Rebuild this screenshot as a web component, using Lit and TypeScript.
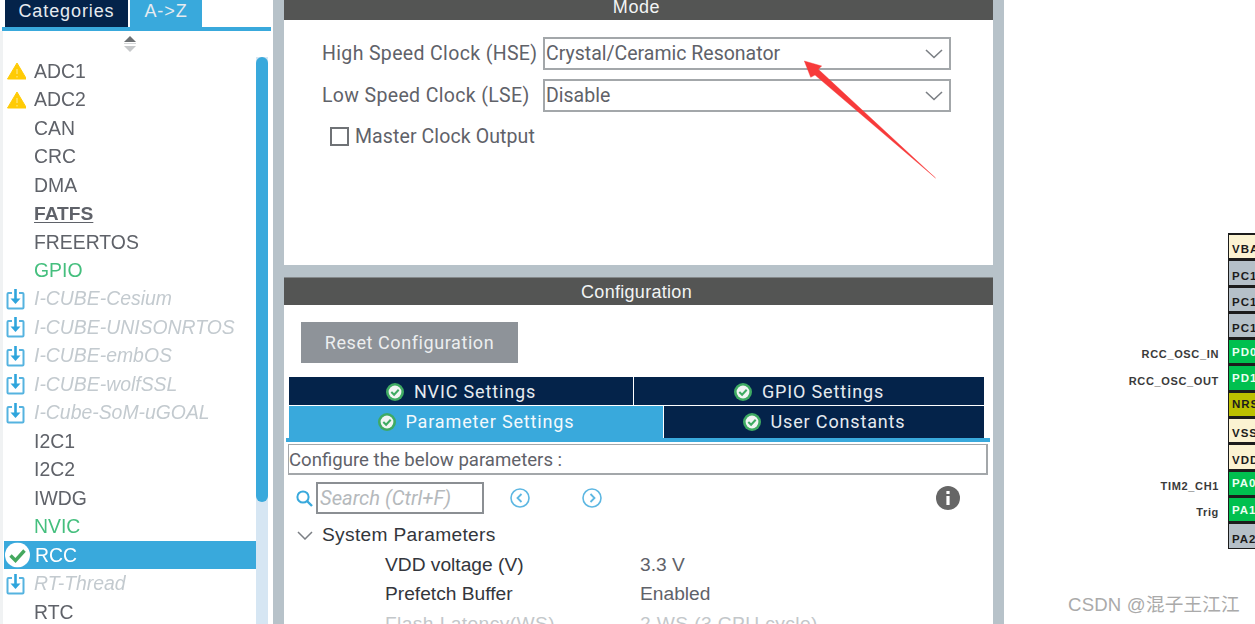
import { LitElement, html, css, svg } from "lit";
import { customElement } from "lit/decorators.js";

type Item = { t: string; k?: string; i?: string };
const items: Item[] = [
  { t: "ADC1", i: "warn" }, { t: "ADC2", i: "warn" }, { t: "CAN" }, { t: "CRC" }, { t: "DMA" },
  { t: "FATFS", k: "bold" }, { t: "FREERTOS" }, { t: "GPIO", k: "green" },
  { t: "I-CUBE-Cesium", k: "pack", i: "dl" }, { t: "I-CUBE-UNISONRTOS", k: "pack", i: "dl" },
  { t: "I-CUBE-embOS", k: "pack", i: "dl" }, { t: "I-CUBE-wolfSSL", k: "pack", i: "dl" },
  { t: "I-Cube-SoM-uGOAL", k: "pack", i: "dl" }, { t: "I2C1" }, { t: "I2C2" }, { t: "IWDG" },
  { t: "NVIC", k: "green" }, { t: "RCC", k: "sel", i: "ok" }, { t: "RT-Thread", k: "pack", i: "dl" }, { t: "RTC" },
];
const pins = [
  ["", "VBAT", "beige"], ["", "PC13-", "grey"], ["", "PC14-", "grey"], ["", "PC15-", "grey"],
  ["RCC_OSC_IN", "PD0-OSC", "green"], ["RCC_OSC_OUT", "PD1-OSC", "green"], ["", "NRST", "olive"],
  ["", "VSSA", "beige"], ["", "VDDA", "beige"], ["TIM2_CH1", "PA0-WKUP", "green"], ["Trig", "PA1", "green"], ["", "PA2", "grey"],
];

const warn = svg`<svg class="ic" width="20" height="18" viewBox="-1 0 20 18"><path d="M10 1 L19.5 17 H0.5 Z" fill="#ffcb05" stroke="#ffcb05" stroke-linejoin="round"/><path d="M10 7v5M10 14v1.5" stroke="#ffe680" stroke-width="1.2"/></svg>`;
const dl = svg`<svg class="ic" width="20" height="22" viewBox="0 0 20 22"><path d="M6 5H2.5a1 1 0 0 0-1 1v13.5a1 1 0 0 0 1 1h14a1 1 0 0 0 1-1V6a1 1 0 0 0-1-1H13" fill="none" stroke="#55b3e0" stroke-width="2"/><path d="M9.5 1v11" stroke="#2fa5dc" stroke-width="2.6"/><path d="M4.5 10.5h10l-5 5.5z" fill="#2fa5dc"/></svg>`;
const ok = svg`<svg class="ic" width="25" height="25" viewBox="0 0 25 25"><circle cx="12.5" cy="12.5" r="12.5" fill="#fff"/><path d="M5.5 13l5 5 9-10" fill="none" stroke="#45a85f" stroke-width="3.4"/></svg>`;
const tabOk = svg`<svg class="tok" width="18" height="18" viewBox="0 0 18 18"><circle cx="9" cy="9" r="9" fill="#3faa63"/><circle cx="9" cy="9" r="6.4" fill="#f2f5f4"/><path d="M5.3 9l2.8 2.8 4.6-5" fill="none" stroke="#3faa63" stroke-width="2"/></svg>`;
const chevron = svg`<svg width="18" height="10" viewBox="0 0 18 10"><path d="M1 1l8 7.5L17 1" fill="none" stroke="#7b7f84" stroke-width="1.6"/></svg>`;

@customElement("app-root")
export class AppRoot extends LitElement {
  static styles = css`
    :host { display: block; width: 1255px; height: 624px; overflow: hidden; background: #fff;
      font-family: Roboto, "Liberation Sans", Arial, sans-serif; color: #5f6269; }
    .app { display: grid; grid-template-columns: 273px 11px 709px 11px 251px; height: 624px; position: relative; filter: blur(0.35px); }
    .gut { background: #b7c2c9; }
    /* left */
    .left { display: flex; flex-direction: column; background: #fff; overflow: hidden; font-family: "Liberation Sans", Arial, sans-serif; }
    .tabs { display: flex; height: 27px; padding-left: 5px; gap: 2px; flex: none; }
    .tab { font-size: 18px; letter-spacing: .9px; line-height: 23px; color: #e6ebf0; background: #04234a; width: 123px; text-align: center; }
    .tab.on { background: #39a9dc; width: 72px; }
    .rule { height: 4px; background: #39a9dc; margin-left: 2px; margin-right: 2px; flex: none; }
    .lbody { flex: 1; display: grid; grid-template-columns: 252px 12px 1fr; margin-left: 3px; box-shadow: -3px 0 0 #f0f2f3; min-height: 0; padding-left: 1px; }
    .lmain { display: flex; flex-direction: column; min-width: 0; }
    .sort { height: 26px; display: flex; flex-direction: column; align-items: center; padding-top: 5px; box-sizing: border-box; flex: none; }
    .row { height: 28.47px; flex: none; box-sizing: border-box; padding-top: 0; display: flex; align-items: center; font-size: 19.4px; padding-left: 30px; position: relative; white-space: nowrap; }
    .row .ic { position: absolute; left: 2px; top: 50%; transform: translateY(-50%); }
    .row.bold { font-weight: 700; text-decoration: underline; text-underline-offset: 2px; font-size: 19.2px; }
    .row.green { color: #45bf7e; }
    .row.pack { color: #c3cacf; font-style: italic; }
    .row.sel { background: #39a9dc; color: #fff; padding-left: 31px; }
    .row.sel .ic { left: 1px; }
    .track { margin-top: 26px; background: #d6e6f3; }
    .thumb { height: 445px; background: #39a9dc; border-radius: 6px; }
    /* centre */
    .center { display: flex; flex-direction: column; min-width: 0; }
    .head { background: #545554; color: #f2f4f4; font-family: "Liberation Sans", Arial, sans-serif; font-size: 18px; text-align: center; flex: none; padding-right: 4px; }
    .mode { height: 265px; flex: none; background: #fff; display: flex; flex-direction: column; overflow: hidden; }
    .mode .head { height: 20px; line-height: 15px; letter-spacing: .6px; }
    .modebody { padding: 17px 42px 0 38px; display: flex; flex-direction: column; }
    .frow { display: flex; align-items: center; height: 33px; margin-bottom: 9px; justify-content: space-between; font-size: 19.5px; letter-spacing: .35px; white-space: nowrap; }
    .select { width: 408px; height: 33px; box-sizing: border-box; border: 2px solid #a3a7aa; display: flex; align-items: center; justify-content: space-between; padding: 0 6px 0 1px; letter-spacing: 0; margin-left: 1px; }
    .chk { display: flex; align-items: center; gap: 6px; margin: 4px 0 0 8px; font-size: 19.5px; letter-spacing: .1px; }
    .box { width: 15px; height: 15px; border: 2px solid #6f7276; box-sizing: content-box; }
    .gap { height: 12px; flex: none; background: #b7c2c9; }
    .conf { flex: 1; background: #fff; display: flex; flex-direction: column; overflow: hidden; min-height: 0; }
    .conf .head { height: 28px; line-height: 28px; letter-spacing: .3px; border-top: 1px solid #84888a; box-sizing: border-box; }
    .reset { margin: 17px 0 14px 17px; width: 217px; height: 41px; background: #8e9399; color: #eceeef; font-size: 18px; letter-spacing: .58px; display: flex; align-items: center; justify-content: center; flex: none; }
    .tg { margin: 0 9px 0 5px; display: flex; flex-direction: column; gap: 1px; flex: none; }
    .tr { display: flex; gap: 1px; }
    .st { background: #04234a; color: #e6ebf0; font-size: 18px; letter-spacing: .85px; display: flex; align-items: center; justify-content: center; gap: 10px; padding-top: 1px; box-sizing: border-box; }
    .tr1 .st { height: 28px; }
    .tr2 .st { height: 32px; padding-bottom: 2px; }
    .st.on { background: #39a9dc; color: #f4f9fc; }
    .bluerule { height: 4px; background: #39a9dc; margin: 0 3px 0 2px; flex: none; }
    .cfg { margin: 2px 5px 0 4px; height: 31px; flex: none; box-sizing: border-box; border: 2px solid #a3a7aa; border-width: 1px 2px 2px 1px; font-size: 18.6px; line-height: 31px; color: #5f6269; white-space: nowrap; }
    .sr { display: flex; align-items: center; height: 32px; margin: 7px 0 0 12px; flex: none; }
    .search { width: 168px; height: 32px; box-sizing: border-box; border: 2px solid #8b8f93; margin-left: 3px; font-style: italic; color: #b5b9bc; font-size: 20.2px; line-height: 29px; padding-left: 2px; white-space: nowrap; overflow: hidden; }
    .c1 { margin-left: 26px; }
    .c2 { margin-left: 52px; }
    .info { margin-left: 334px; }
    .sys { display: flex; align-items: center; height: 30px; margin: 6px 0 0 13px; font-family: "Liberation Sans", Arial, sans-serif; font-size: 19.2px; letter-spacing: .3px; color: #33363c; gap: 9px; flex: none; }
    .pr { display: grid; grid-template-columns: 255px 1fr; padding-left: 101px; height: 29.5px; align-items: center; font-family: "Liberation Sans", Arial, sans-serif; font-size: 19.2px; color: #33363c; flex: none; white-space: nowrap; }
    .pr .v { color: #5f6269; }
    .pr.dim, .pr.dim .v { color: #c3c7ca; letter-spacing: .4px; }
    /* canvas */
    .canvas { position: relative; overflow: hidden; background: #fff; }
    .chip { position: absolute; top: 233px; right: -30px; display: flex; flex-direction: column; }
    .pin { display: flex; align-items: stretch; height: 26.3px; justify-content: flex-end; }
    .lab { font-family: "Liberation Sans", sans-serif; font-size: 11px; font-weight: 700; letter-spacing: .65px; color: #3a3a3a; align-self: center; margin: 6px 9px 0 0; white-space: nowrap; }
    .cell { width: 57px; box-sizing: border-box; border: 1.5px solid #1c1c1c; border-top-width: 2px; border-bottom-width: 1px; font-family: "Liberation Sans", sans-serif; font-size: 11.5px; font-weight: 700; color: #1c1c1c; letter-spacing: 1px; display: flex; align-items: flex-end; padding: 0 0 3px 3px; white-space: nowrap; overflow: hidden; }
    .cell.beige { background: #fbf3d2; }
    .cell.grey { background: #b5c0c8; }
    .cell.green { background: #00c04f; color: #eafff2; align-items: center; padding-bottom: 0; }
    .cell.olive { background: #bcc000; align-items: center; padding-bottom: 0; }
    .mark { position: absolute; left: 64px; top: 594px; font-size: 18.6px; color: #aaa; white-space: nowrap; font-family: "Liberation Sans", "Noto Sans CJK SC", sans-serif; letter-spacing: .2px; line-height: 22px; }
    .arrow { position: absolute; left: 0; top: 0; pointer-events: none; }
  `;

  render() {
    return html`<div class="app">
      <div class="left">
        <div class="tabs"><div class="tab">Categories</div><div class="tab on">A-&gt;Z</div></div>
        <div class="rule"></div>
        <div class="lbody">
          <div class="lmain">
            <div class="sort">
              <svg width="14" height="17" viewBox="0 0 14 17"><path d="M7 0l6 6H1z" fill="#6d7073"/><path d="M1 7.5h12" stroke="#d5d7d9" stroke-width="1"/><path d="M1 10h12l-6 6z" fill="#c6c8ca"/></svg>
            </div>
            ${items.map(
              (r) => html`<div class="row ${r.k ?? ""}">
                ${r.i === "warn" ? warn : r.i === "dl" ? dl : r.i === "ok" ? ok : ""}${r.t}
              </div>`
            )}
          </div>
          <div class="track"><div class="thumb"></div></div>
          <div></div>
        </div>
      </div>
      <div class="gut"></div>
      <div class="center">
        <div class="mode">
          <div class="head">Mode</div>
          <div class="modebody">
            <div class="frow"><span>High Speed Clock (HSE)</span><div class="select"><span>Crystal/Ceramic Resonator</span>${chevron}</div></div>
            <div class="frow"><span>Low Speed Clock (LSE)</span><div class="select"><span>Disable</span>${chevron}</div></div>
            <div class="chk"><div class="box"></div><span>Master Clock Output</span></div>
          </div>
        </div>
        <div class="gap"></div>
        <div class="conf">
          <div class="head">Configuration</div>
          <div class="reset">Reset Configuration</div>
          <div class="tg">
            <div class="tr tr1">
              <div class="st" style="width:344px">${tabOk}NVIC Settings</div>
              <div class="st" style="width:350px">${tabOk}GPIO Settings</div>
            </div>
            <div class="tr tr2">
              <div class="st on" style="width:374px">${tabOk}Parameter Settings</div>
              <div class="st" style="width:320px">${tabOk}User Constants</div>
            </div>
          </div>
          <div class="bluerule"></div>
          <div class="cfg">Configure the below parameters :</div>
          <div class="sr">
            <svg width="17" height="17" viewBox="0 0 17 17"><circle cx="7" cy="7" r="5.6" fill="none" stroke="#39a9dc" stroke-width="2"/><path d="M11 11l5 5" stroke="#39a9dc" stroke-width="2.4"/></svg>
            <div class="search">Search (Ctrl+F)</div>
            <svg class="c1" width="20" height="20" viewBox="0 0 20 20"><circle cx="10" cy="10" r="9" fill="none" stroke="#5db7e2" stroke-width="1.6"/><path d="M11.5 6l-4 4 4 4" fill="none" stroke="#5db7e2" stroke-width="1.8"/></svg>
            <svg class="c2" width="20" height="20" viewBox="0 0 20 20"><circle cx="10" cy="10" r="9" fill="none" stroke="#5db7e2" stroke-width="1.6"/><path d="M8.5 6l4 4-4 4" fill="none" stroke="#5db7e2" stroke-width="1.8"/></svg>
            <svg class="info" width="24" height="24" viewBox="0 0 24 24"><circle cx="12" cy="12" r="12" fill="#666"/><rect x="10.4" y="10" width="3.2" height="9" fill="#fff"/><rect x="10.4" y="5" width="3.2" height="3" fill="#fff"/></svg>
          </div>
          <div class="sys"><svg width="16" height="9" viewBox="0 0 16 9"><path d="M1 1l7 7 7-7" fill="none" stroke="#7b7f84" stroke-width="1.5"/></svg><span>System Parameters</span></div>
          <div class="pr"><span>VDD voltage (V)</span><span class="v">3.3 V</span></div>
          <div class="pr"><span>Prefetch Buffer</span><span class="v">Enabled</span></div>
          <div class="pr dim"><span>Flash Latency(WS)</span><span class="v">2 WS (3 CPU cycle)</span></div>
        </div>
      </div>
      <div class="gut"></div>
      <div class="canvas">
        <div class="chip">
          ${pins.map(
            ([l, p, c]) => html`<div class="pin">${l ? html`<span class="lab">${l}</span>` : ""}<div class="cell ${c}">${p}</div></div>`
          )}
        </div>
        <div class="mark">CSDN @混子王江江</div>
      </div>
      <svg class="arrow" width="1255" height="624" viewBox="0 0 1255 624"><polygon points="804.3,61 821.7,66 818.3,69.3 935.5,178 815,75 810.7,77.3" fill="#f73a3a" stroke="#f73a3a" stroke-width=".4"/></svg>
    </div>`;
  }
}
